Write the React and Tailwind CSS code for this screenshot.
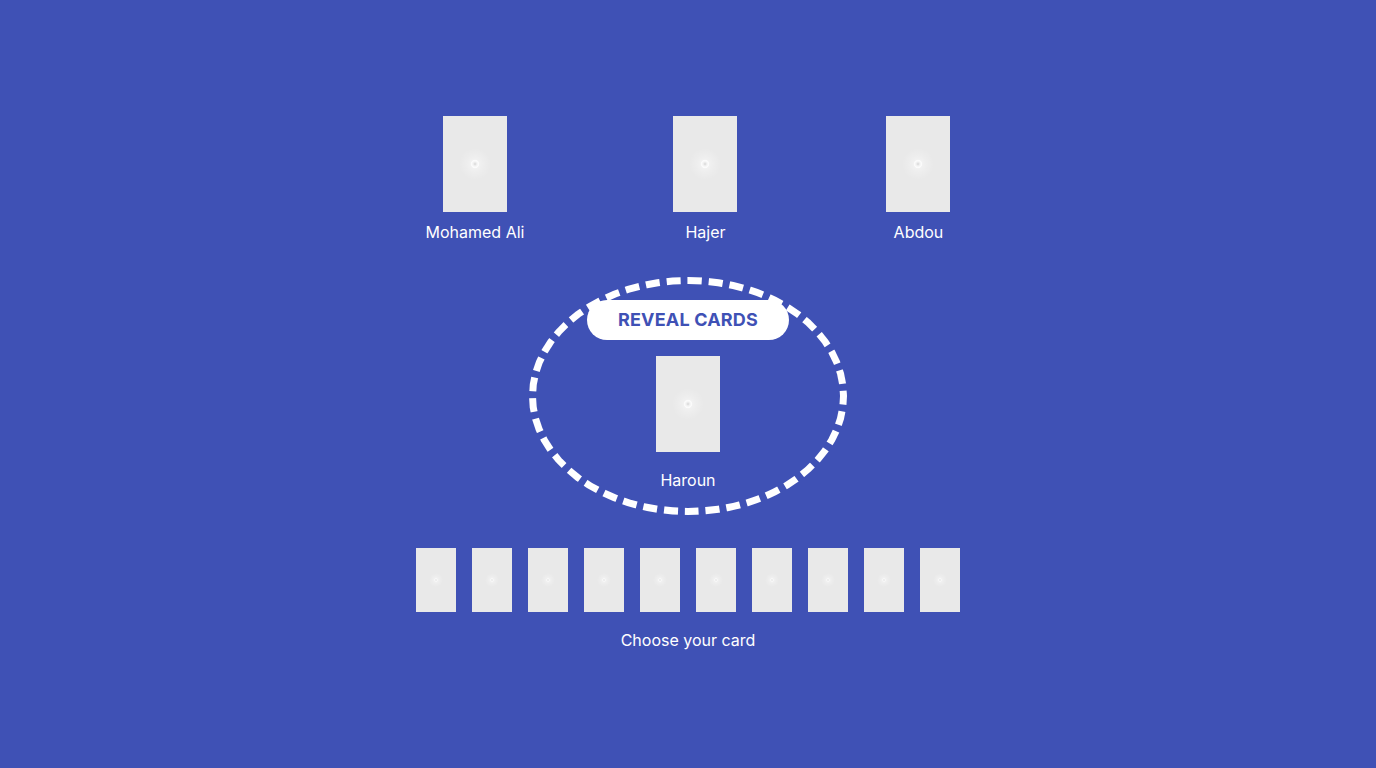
import React from "react";

function Emblem({ size = 24, id }) {
  return (
    <svg width={size} height={size} viewBox="0 0 24 24">
      <defs>
        <radialGradient id={id} cx="50%" cy="50%" r="50%">
          <stop offset="0%" stopColor="#ffffff" stopOpacity="0.55" />
          <stop offset="55%" stopColor="#ffffff" stopOpacity="0.2" />
          <stop offset="100%" stopColor="#ffffff" stopOpacity="0" />
        </radialGradient>
      </defs>
      <circle cx="12" cy="12" r="12" fill={`url(#${id})`} />
      <circle cx="12" cy="12" r="2.6" fill="none" stroke="#ffffff" strokeOpacity="0.7" strokeWidth="1.1" />
      <circle cx="12" cy="12" r="1.1" fill="#e0e0e0" />
    </svg>
  );
}

function Card({ small }) {
  return small ? (
    <div className="w-10 h-16 bg-[#e9e9e9] flex items-center justify-center">
      <Emblem size={14} id="glow-s" />
    </div>
  ) : (
    <div className="w-16 h-24 bg-[#e9e9e9] flex items-center justify-center">
      <Emblem size={32} id="glow-l" />
    </div>
  );
}

function Player({ name }) {
  return (
    <div className="flex flex-col items-center">
      <Card />
      <p className="mt-2 text-base leading-6 text-white">{name}</p>
    </div>
  );
}

export default function App() {
  const players = ["Mohamed Ali", "Hajer", "Abdou"];

  return (
    <div
      className="min-h-screen bg-[#3f51b5] flex flex-col items-center justify-center"
      style={{ fontFamily: "Inter, 'Noto Sans', sans-serif" }}
    >
      <div className="flex items-start gap-[149px]">
        {players.map((p) => (
          <Player key={p} name={p} />
        ))}
      </div>

      <div className="mt-[33px] w-[318px] h-[238px] rounded-[50%] border-[7px] border-dashed border-white flex flex-col items-center pt-4">
        <button className="w-[202px] h-10 rounded-full bg-white text-[#3f51b5] text-lg font-bold tracking-[0.01em]">
          REVEAL CARDS
        </button>
        <div className="mt-4 flex flex-col items-center">
          <Card />
          <p className="mt-4 text-base leading-6 text-white">Haroun</p>
        </div>
      </div>

      <div className="mt-[33px] flex gap-4">
        {Array.from({ length: 10 }).map((_, i) => (
          <Card key={i} small />
        ))}
      </div>
      <p className="mt-4 text-base leading-6 text-white">Choose your card</p>
    </div>
  );
}
